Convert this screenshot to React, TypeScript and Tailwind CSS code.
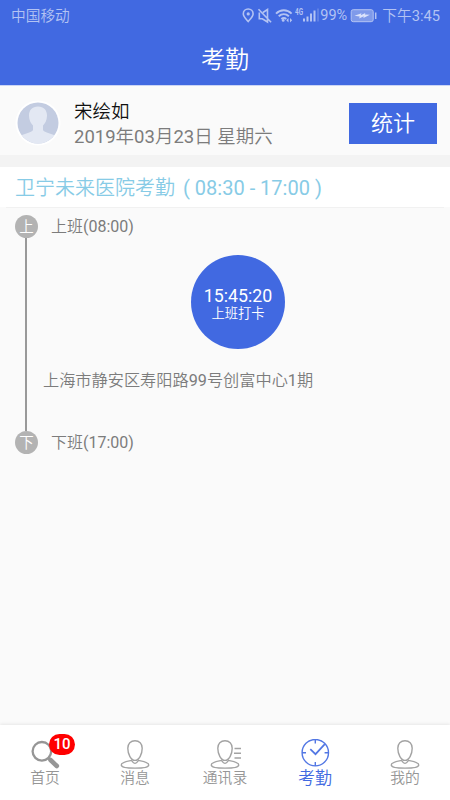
import type { ReactNode } from "react";

const tabs = [
  { key: "home", label: "首页", badge: 10 },
  { key: "message", label: "消息" },
  { key: "contacts", label: "通讯录" },
  { key: "attendance", label: "考勤", active: true },
  { key: "mine", label: "我的" },
];

function StatusBar() {
  return (
    <div className="flex h-8 items-center pl-[11px] pr-[10px] text-[14.7px] leading-none text-[#b3c3f3]">
      <span className="mt-px">中国移动</span>
      <svg className="ml-auto h-8 w-[78px] shrink-0" viewBox="0 0 78 32" fill="none" stroke="currentColor">
        <path d="M6.2 21.5C3.4 18.2 1.3 16.3 1.3 13.9a4.9 4.9 0 0 1 9.8 0c0 2.4-2 4.3-4.9 7.6Z" strokeWidth="1.6" />
        <circle cx="6.2" cy="13.9" r="1.6" fill="currentColor" stroke="none" />
        <path d="M17.3 12.5v6.2h3l5.2 3.3V9.5l-4.6 3M16.500 9.300l12.600 12.900" strokeWidth="1.600" />
        <path d="M34 13.600c4.500-4.500 11.100-4.500 15.600 0M36.700 16.300c3-2.700 7.200-2.700 10.200 0M39.300 18.900c1.600-1.200 3.500-1.200 5 0" strokeWidth="1.900" />
        <circle cx="41.200" cy="20.400" r="1.400" fill="currentColor" stroke="none" />
        <path d="m46.500 18-2.200 2.300 2.200 2.300v-4.600Zm1.500 0 2.200 2.300-2.200 2.300v-4.600Z" fill="currentColor" stroke="none" />
        <text x="53" y="14.500" fontSize="8.500" fontWeight="700" fill="currentColor" stroke="none" textLength="8" lengthAdjust="spacingAndGlyphs">4G</text>
        <path d="M62 21.500v-3M65.500 21.500v-5M69 21.500v-8M72.500 21.500v-11" strokeWidth="2" />
        <path d="M76 21.500v-13" strokeWidth="1.500" opacity=".35" />
      </svg>
      <span className="mt-px w-[30px] whitespace-nowrap text-[14.500px]">99%</span>
      <svg className="h-8 w-[27px] shrink-0" viewBox="0 0 27 32" fill="none" stroke="currentColor">
        <rect x="1.200" y="9.700" width="22" height="12" rx="2" fill="#7f9aea" strokeWidth="1" />
        <path d="M25.700 12.500v6.500" strokeWidth="1.500" />
        <path d="m4.500 15.700 7-2.400-.7 1.900 4.500-2.300-.4 1.700 5 .1-6.500 3.200.3-1.700-4.500 2.400.5-2.100Z" fill="#dbe3fb" stroke="none" />
      </svg>
      <span className="ml-[5px] mt-px whitespace-nowrap">下午3:45</span>
    </div>
  );
}

function Avatar() {
  return (
    <svg className="size-[46px] shrink-0" viewBox="0 0 46 46">
      <defs>
        <clipPath id="avatar">
          <circle cx="23" cy="23" r="20.5" />
        </clipPath>
      </defs>
      <circle cx="23" cy="23" r="22.5" fill="#fff" />
      <circle cx="23" cy="23" r="20.5" fill="#c3cce1" />
      <path
        clipPath="url(#avatar)"
        fill="#e3e8f3"
        d="M23 6.500c-6 0-9.200 4-9 9.500.1 4.500 2 7.500 4 9.500v4.500c-1 2.500-10 3.500-14 7V46h38v-9c-4-3.500-13-4.500-14-7v-4.500c2-2 3.900-5 4-9.500.2-5.500-3-9.500-9-9.500Z"
      />
    </svg>
  );
}

function PersonIcon({ children }: { children?: ReactNode }) {
  return (
    <svg className="size-8" viewBox="0 0 32 32" fill="none" stroke="#a3a3a3" strokeWidth="1.4">
      <path d="M16 1.700c-4.300 0-7.200 3-7.200 7.500 0 6 3.200 12.200 7.200 12.200s7.200-6.200 7.200-12.200c0-4.500-2.900-7.500-7.200-7.500Z" />
      <path d="M12.500 21.400C8 22.400 2.300 23 2.300 25.900c0 2.400 5.500 3.200 13.700 3.200s13.700-.8 13.700-3.200c0-2.900-5.700-3.500-10.200-4.500-1.200 1.600-2.200 3-3.500 3s-2.300-1.400-3.500-3Z" />
      {children}
    </svg>
  );
}

function TabIcon({ name }: { name: string }) {
  if (name === "home") {
    return (
      <svg className="size-8" viewBox="0 0 32 32" fill="none" stroke="#969696">
        <circle cx="12.900" cy="12.300" r="9.300" strokeWidth="2.300" />
        <path d="m19.500 19 2.500 2.500" strokeWidth="2.800" />
        <path d="m21.500 21 6.300 6" strokeWidth="4.600" strokeLinecap="round" />
      </svg>
    );
  }
  if (name === "attendance") {
    return (
      <svg className="size-8" viewBox="0 0 32 32" fill="none" stroke="#5277e4" strokeWidth="1.400">
        <circle cx="16.300" cy="13.700" r="13.200" />
        <path d="M16.300 .5v4M16.300 22.900v4M3 13.700h4M25.600 13.700h4" />
        <path d="m11.300 10.200 5.200 5 9.300-10" strokeWidth="1.700" />
      </svg>
    );
  }
  return (
    <PersonIcon>{name === "contacts" && <path d="M25.500 9.500h6.500M25 14.200h7M25.500 19h6.500" />}</PersonIcon>
  );
}

function Shift({ mark, text }: { mark: string; text: string }) {
  return (
    <div className="flex h-[23px] items-center">
      <span className="flex size-[23px] items-center justify-center rounded-full bg-[#b3b3b3] pt-[3px] text-[14.500px] leading-none text-white">
        {mark}
      </span>
      <span className="ml-[13px] text-[16px] leading-none">{text}</span>
    </div>
  );
}

export default function App() {
  return (
    <div className="flex h-[800px] w-[450px] flex-col overflow-hidden bg-[#fafafa] font-['Roboto','Noto_Sans_CJK_SC_DemiLight','Noto_Sans_CJK_SC',sans-serif] text-[#7c7c7c]">
      <header className="h-[86px] shrink-0 border-b border-[#cbd5f5] bg-[#4169e1]">
        <StatusBar />
        <h1 className="flex h-[55px] items-center justify-center text-[24px] leading-none text-white">考勤</h1>
      </header>

      <section className="flex h-[69px] shrink-0 items-center pl-[15px] pr-[13px] pt-[5px]">
        <Avatar />
        <div className="ml-[13px] mt-[3px] text-[18.500px] leading-[25px]">
          <p className="text-[#111]">宋绘如</p>
          <p>2019年03月23日 星期六</p>
        </div>
        <button className="ml-auto h-[41px] w-[88px] bg-[#4169e1] pt-px text-[22px] text-white">统计</button>
      </section>

      <div className="h-3 shrink-0 bg-[#f3f3f3]" />
      <h2 className="flex h-10 shrink-0 items-center bg-white pl-[15px] pt-[2px] text-[20px] leading-none text-[#87cbe6]">
        卫宁未来医院考勤
        <span className="ml-[8px]">(</span>
        <span className="ml-[5px]">08:30 - 17:00</span>
        <span className="ml-[5px]">)</span>
      </h2>

      <main className="flex grow flex-col px-[15px]">
        <div className="-mx-[9px] h-px bg-[#f1f1f1]" />
        <div className="mt-[7px]">
          <Shift mark="上" text="上班(08:00)" />
          <div className="ml-[10px] flex h-[193px] flex-col border-l-2 border-[#999] pl-[16px]">
            <button className="ml-[148px] mt-[17px] flex size-[94px] flex-col items-center justify-center rounded-full bg-[#4169e1] text-white">
              <span className="mt-1 text-[17.800px] leading-[19px]">15:45:20</span>
              <span className="text-[13.300px] leading-[17px]">上班打卡</span>
            </button>
            <p className="mt-[20px] whitespace-nowrap text-[16.200px] leading-[24px]">上海市静安区寿阳路99号创富中心1期</p>
          </div>
          <Shift mark="下" text="下班(17:00)" />
        </div>
      </main>

      <nav className="grid h-[75px] shrink-0 grid-cols-5 bg-white pt-[14px] shadow-[0_-1px_3px_rgba(0,0,0,0.08)]">
        {tabs.map((tab) => (
          <div key={tab.key} className="flex flex-col items-center">
            <div className="relative h-[30px]">
              <TabIcon name={tab.key} />
              {tab.badge && (
                <span className="absolute -top-[5px] left-5 flex h-[21px] w-[26px] items-center justify-center rounded-full bg-[#f00] text-[15px] font-medium leading-none text-white">
                  {tab.badge}
                </span>
              )}
            </div>
            <span
              className={
                tab.active
                  ? "text-[17px] leading-[19px] text-[#4169e1]"
                  : "text-[14.800px] leading-[19px] text-[#969696]"
              }
            >
              {tab.label}
            </span>
          </div>
        ))}
      </nav>
    </div>
  );
}
